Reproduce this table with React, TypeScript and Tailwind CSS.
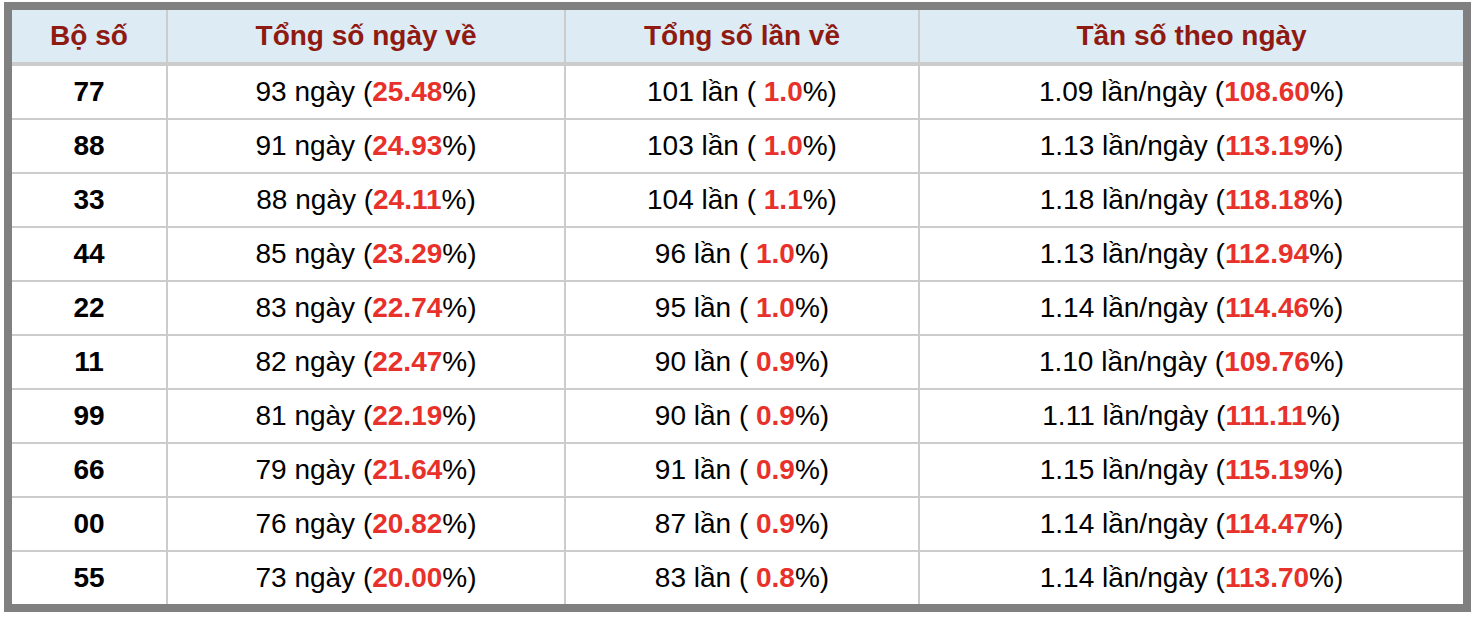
// Bảng thống kê tần số các bộ số

const rows = [
  { bo: "77", ngay: 93, ngayPct: "25.48", lan: 101, lanPct: "1.0", tan: "1.09", tanPct: "108.60" },
  { bo: "88", ngay: 91, ngayPct: "24.93", lan: 103, lanPct: "1.0", tan: "1.13", tanPct: "113.19" },
  { bo: "33", ngay: 88, ngayPct: "24.11", lan: 104, lanPct: "1.1", tan: "1.18", tanPct: "118.18" },
  { bo: "44", ngay: 85, ngayPct: "23.29", lan: 96, lanPct: "1.0", tan: "1.13", tanPct: "112.94" },
  { bo: "22", ngay: 83, ngayPct: "22.74", lan: 95, lanPct: "1.0", tan: "1.14", tanPct: "114.46" },
  { bo: "11", ngay: 82, ngayPct: "22.47", lan: 90, lanPct: "0.9", tan: "1.10", tanPct: "109.76" },
  { bo: "99", ngay: 81, ngayPct: "22.19", lan: 90, lanPct: "0.9", tan: "1.11", tanPct: "111.11" },
  { bo: "66", ngay: 79, ngayPct: "21.64", lan: 91, lanPct: "0.9", tan: "1.15", tanPct: "115.19" },
  { bo: "00", ngay: 76, ngayPct: "20.82", lan: 87, lanPct: "0.9", tan: "1.14", tanPct: "114.47" },
  { bo: "55", ngay: 73, ngayPct: "20.00", lan: 83, lanPct: "0.8", tan: "1.14", tanPct: "113.70" },
];

const headers = ["Bộ số", "Tổng số ngày về", "Tổng số lần về", "Tần số theo ngày"];

function Red({ children }: { children: React.ReactNode }) {
  return <span className="font-bold text-[#e8312a]">{children}</span>;
}

export default function App() {
  return (
    <div className="w-[1478px] h-[618px] bg-white pt-[2px] pl-[4px] font-['Liberation_Sans',Arial,sans-serif] text-[28px] text-black">
      <div className="w-[1467px] border-[8px] border-[#808080]">
        <div className="grid grid-cols-[154px_396px_352px_543px] gap-x-[2px] bg-[#cccccc]">
          {/* Header */}
          {headers.map((h) => (
            <div
              key={h}
              className="h-[52px] mb-[4px] flex items-center justify-center bg-[#ddebf4] font-bold text-[#8e1a12]"
            >
              {h}
            </div>
          ))}

          {/* Body */}
          {rows.map((r, i) => {
            const sep = i < rows.length - 1 ? "mb-[2px]" : "";
            const cell = `h-[52px] flex items-center justify-center bg-white ${sep}`;
            return [
              <div key={r.bo + "a"} className={`${cell} font-bold`}>
                {r.bo}
              </div>,
              <div key={r.bo + "b"} className={cell}>
                <span>
                  {r.ngay} ngày (<Red>{r.ngayPct}</Red>%)
                </span>
              </div>,
              <div key={r.bo + "c"} className={cell}>
                <span>
                  {r.lan} lần ( <Red>{r.lanPct}</Red>%)
                </span>
              </div>,
              <div key={r.bo + "d"} className={cell}>
                <span>
                  {r.tan} lần/ngày (<Red>{r.tanPct}</Red>%)
                </span>
              </div>,
            ];
          })}
        </div>
      </div>
    </div>
  );
}
